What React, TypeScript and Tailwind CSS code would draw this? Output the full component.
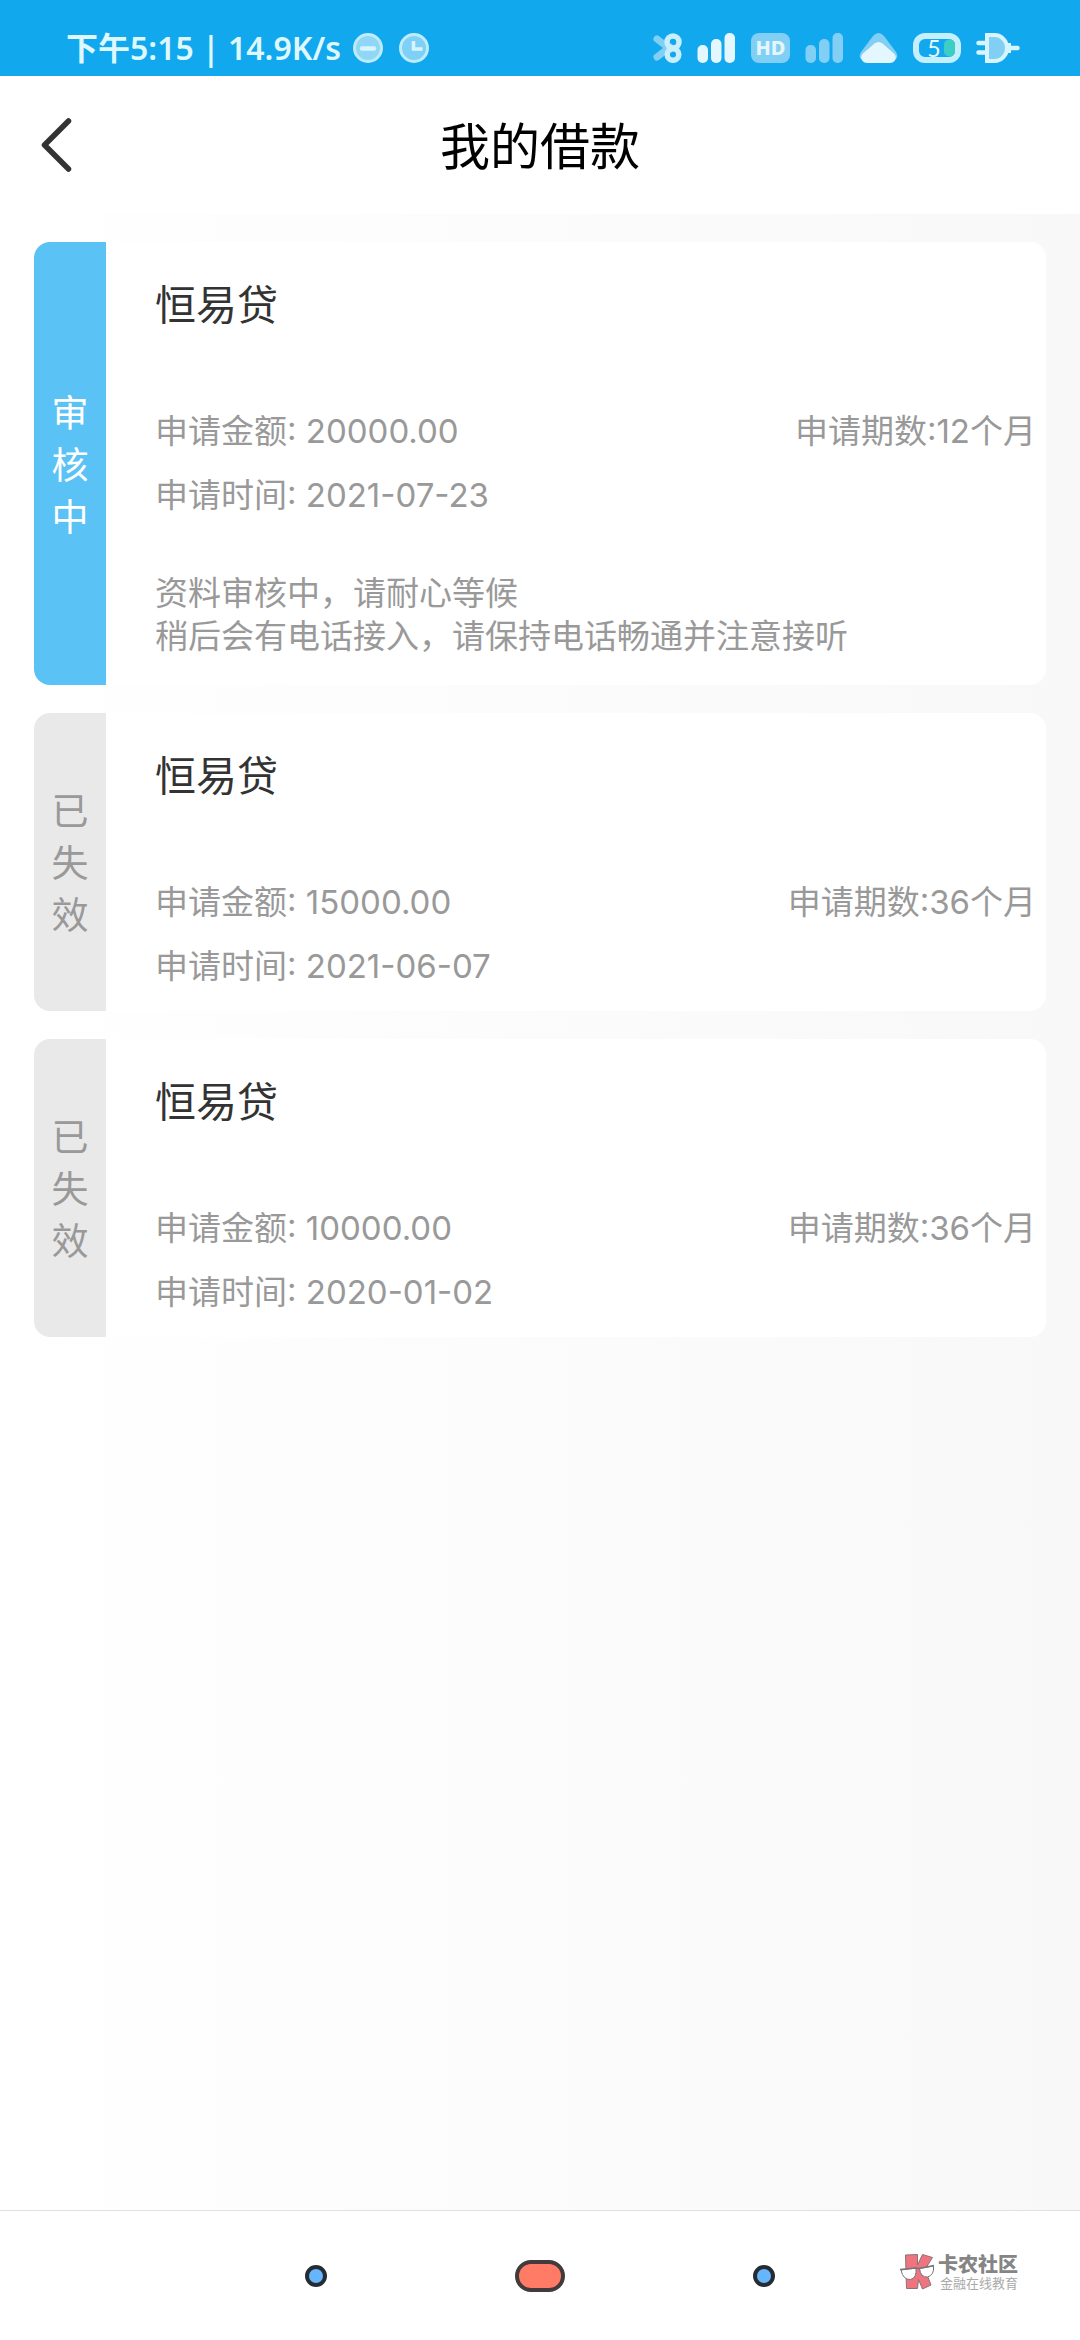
import React from 'react';

interface Loan {
    id: number;
    name: string;
    status: string;
    active: boolean;
    amount: string;
    date: string;
    months: number;
    notes: string[];
}

const LOANS: Loan[] = [
    {
        id: 1,
        name: '恒易贷',
        status: '审核中',
        active: true,
        amount: '20000.00',
        date: '2021-07-23',
        months: 12,
        notes: ['资料审核中，请耐心等候', '稍后会有电话接入，请保持电话畅通并注意接听'],
    },
    { id: 2, name: '恒易贷', status: '已失效', active: false, amount: '15000.00', date: '2021-06-07', months: 36, notes: [] },
    { id: 3, name: '恒易贷', status: '已失效', active: false, amount: '10000.00', date: '2020-01-02', months: 36, notes: [] },
];

const MinusBadge = () => (
    <svg className="w-[30px] h-[30px]" viewBox="0 0 30 30">
        <circle cx="15" cy="15" r="13.5" fill="#8fd6f7" stroke="#bfecfd" strokeWidth="3" />
        <path d="M9 15.5h12" stroke="#d6f5ff" strokeWidth="4.5" strokeLinecap="round" />
    </svg>
);

const ClockBadge = () => (
    <svg className="w-[30px] h-[30px]" viewBox="0 0 30 30">
        <circle cx="15" cy="15" r="13.5" fill="#7fd0f6" stroke="#bfecfd" strokeWidth="3" />
        <path d="M14.5 8v8h9" fill="none" stroke="#d6f5ff" strokeWidth="3.5" />
    </svg>
);

const BluetoothIcon = () => (
    <svg className="w-[29px] h-[30px]" viewBox="0 0 29 30" fill="none">
        <path d="M4 6l13 10M4 24l13-10" stroke="#82cff5" strokeWidth="7" strokeLinecap="round" />
        <circle cx="20" cy="9" r="6" stroke="#c9effd" strokeWidth="5.5" />
        <circle cx="20" cy="21.5" r="5.8" stroke="#c9effd" strokeWidth="5.5" />
    </svg>
);

const SignalIcon = ({ color }: { color: string }) => (
    <svg className="w-[39px] h-[30px]" viewBox="0 0 39 30" fill={color}>
        <rect x="0.5" y="12" width="10.5" height="18" rx="5" />
        <rect x="14" y="6" width="10.5" height="24" rx="5" />
        <rect x="27.5" y="0" width="10.5" height="30" rx="5" />
    </svg>
);

const CloudIcon = () => (
    <svg className="w-[39px] h-[30px]" viewBox="0 0 39 30">
        <path d="M14 3Q19.5-3 25 3L37 19Q41 26 33 28H6Q-2 26 2 19Z" fill="#82cff5" />
        <path d="M15.5 10.5Q19.5 7.5 23.5 10.5L35 20.5Q38.5 24 35.5 28Q34 30 31 30H8Q5 30 3.5 28Q0.5 24 4 20.5Z" fill="#e4f6fe" />
    </svg>
);

const BatteryIcon = () => (
    <svg className="w-12 h-[30px]" viewBox="0 0 48 30">
        <rect x="3" y="3" width="42" height="24" rx="9" fill="#12a8ed" stroke="#c3effe" strokeWidth="6" />
        <rect x="31" y="6.5" width="11" height="17" rx="5" fill="#3ecdc4" />
        <text x="21" y="23.5" textAnchor="middle" fontFamily="Lato, sans-serif" fontSize="23" fill="#e6f9ff">5</text>
    </svg>
);

const PlugIcon = () => (
    <svg className="w-11 h-[30px]" viewBox="0 0 44 30" fill="none">
        <path d="M2.5 10h8M2.5 19.5h8M34 15h7.5" stroke="#d8f5ff" strokeWidth="4.5" strokeLinecap="round" />
        <path d="M11 2h7.5a12.5 13 0 0 1 0 26H11Z" fill="#82cff5" stroke="#d8f5ff" strokeWidth="4" />
        <path d="M31 10h4v10h-4z" fill="#d8f5ff" />
    </svg>
);

const StatusBar = () => (
    <div className="flex justify-between items-center h-[76px] pt-5 pl-[66px] pr-[60px] bg-[#12a8ed]">
        <div className="flex items-center gap-3">
            <span className="font-['Noto_Sans','Noto_Sans_CJK_SC',sans-serif] font-semibold text-[32px] leading-10 text-[#dff7ff]">
                下午5:15 | 14.9K/s
            </span>
            <div className="flex gap-4">
                <MinusBadge />
                <ClockBadge />
            </div>
        </div>
        <div className="flex items-center gap-[15px]">
            <BluetoothIcon />
            <SignalIcon color="#e4f6fe" />
            <span className="w-[39px] h-[30px] rounded-lg bg-[#82cff5] text-[#e4f6fe] text-xl leading-[30px] font-extrabold text-center font-['Noto_Sans',sans-serif]">
                HD
            </span>
            <SignalIcon color="#82cff5" />
            <CloudIcon />
            <BatteryIcon />
            <PlugIcon />
        </div>
    </div>
);

const Header = () => (
    <header className="grid grid-cols-[120px_1fr_120px] items-center h-[138px] bg-white">
        <button className="pl-[38px] h-full" aria-label="返回">
            <svg className="w-9 h-[60px]" viewBox="0 0 36 60" fill="none">
                <path d="M30.5 6L6.5 30l24 24" stroke="#333" strokeWidth="5.5" strokeLinecap="round" strokeLinejoin="round" />
            </svg>
        </button>
        <h1 className="pt-1 text-center text-[50px] leading-[60px] text-black">我的借款</h1>
    </header>
);

const LoanCard: React.FC<{ loan: Loan }> = ({ loan }) => (
    <li className="flex rounded-2xl overflow-hidden bg-white">
        <div
            className={`w-[72px] flex-shrink-0 flex items-center justify-center pt-1 ${
                loan.active ? 'bg-[#5ac2f4] text-white' : 'bg-[#e9e9e9] text-[#999]'
            }`}
        >
            <span className="w-[37px] text-[37px] leading-[52px] break-all">{loan.status}</span>
        </div>
        <div className="flex-grow pt-[35px] pb-[13px] pl-[49px] pr-[10px] text-[33px] text-[#999]">
            <h2 className="text-[41px] leading-[56px] text-[#333] mb-[66px]">{loan.name}</h2>
            <div className="flex justify-between leading-[64px]">
                <span>申请金额: {loan.amount}</span>
                <span>申请期数:{loan.months}个月</span>
            </div>
            <p className="leading-[64px]">申请时间: {loan.date}</p>
            {loan.notes.length > 0 && (
                <div className="pt-[45px] pb-[14px] leading-[43px]">
                    {loan.notes.map((note) => (
                        <p key={note}>{note}</p>
                    ))}
                </div>
            )}
        </div>
    </li>
);

const Watermark = () => (
    <div className="absolute right-[62px] top-[41px] flex items-center gap-[3px] text-[#858585]">
        <svg className="w-[35px] h-[37px]" viewBox="0 0 35 37">
            <path d="M5.5 2L17.5 1.5V12L22.5 1.5 32.500 4.500 25 16.500 31 32 22.500 36 18.500 26.500 17.500 35.500H6.500Z" fill="#ee7480" stroke="#8d7274" strokeWidth="1" />
            <path d="M1 17l15-2q1 10-5.500 11.500Q3 27 1 17ZM19.500 15.500l14-2.500q1 9-6 11-7 .5-8-8.500Z" fill="#fff" stroke="#777" strokeWidth="1" />
            <path d="M0 16.500l16-1.500 3 .5 15-3" fill="none" stroke="#777" strokeWidth="1.5" />
        </svg>
        <div className="pt-[3px]">
            <p className="text-xl leading-5 font-black">卡农社区</p>
            <p className="text-[13px] leading-4 text-[#aaa] text-right">金融在线教育</p>
        </div>
    </div>
);

const NavBar = () => (
    <nav className="relative flex items-center justify-center h-[130px] border-t border-[#e0e0e0] bg-white">
        <div className="flex items-center gap-[188px]">
            <button aria-label="菜单" className="w-[22px] h-[22px] rounded-full border-4 border-[#262d32] bg-[#66b5fd]" />
            <button aria-label="主页" className="w-[50px] h-8 rounded-full border-4 border-[#433a3c] bg-[#ff7b66]" />
            <button aria-label="后退" className="w-[22px] h-[22px] rounded-full border-4 border-[#262d32] bg-[#66b5fd]" />
        </div>
        <Watermark />
    </nav>
);

const App: React.FC = () => {
    return (
        <div className="min-h-screen flex flex-col bg-white font-['Inter','Noto_Sans_CJK_SC',sans-serif]">
            <StatusBar />
            <Header />
            <main className="flex-grow bg-gradient-to-r from-white to-[#f8f8f8] px-[34px] py-7">
                <ul className="flex flex-col gap-7">
                    {LOANS.map((loan) => (
                        <LoanCard key={loan.id} loan={loan} />
                    ))}
                </ul>
            </main>
            <NavBar />
        </div>
    );
};

export default App;
